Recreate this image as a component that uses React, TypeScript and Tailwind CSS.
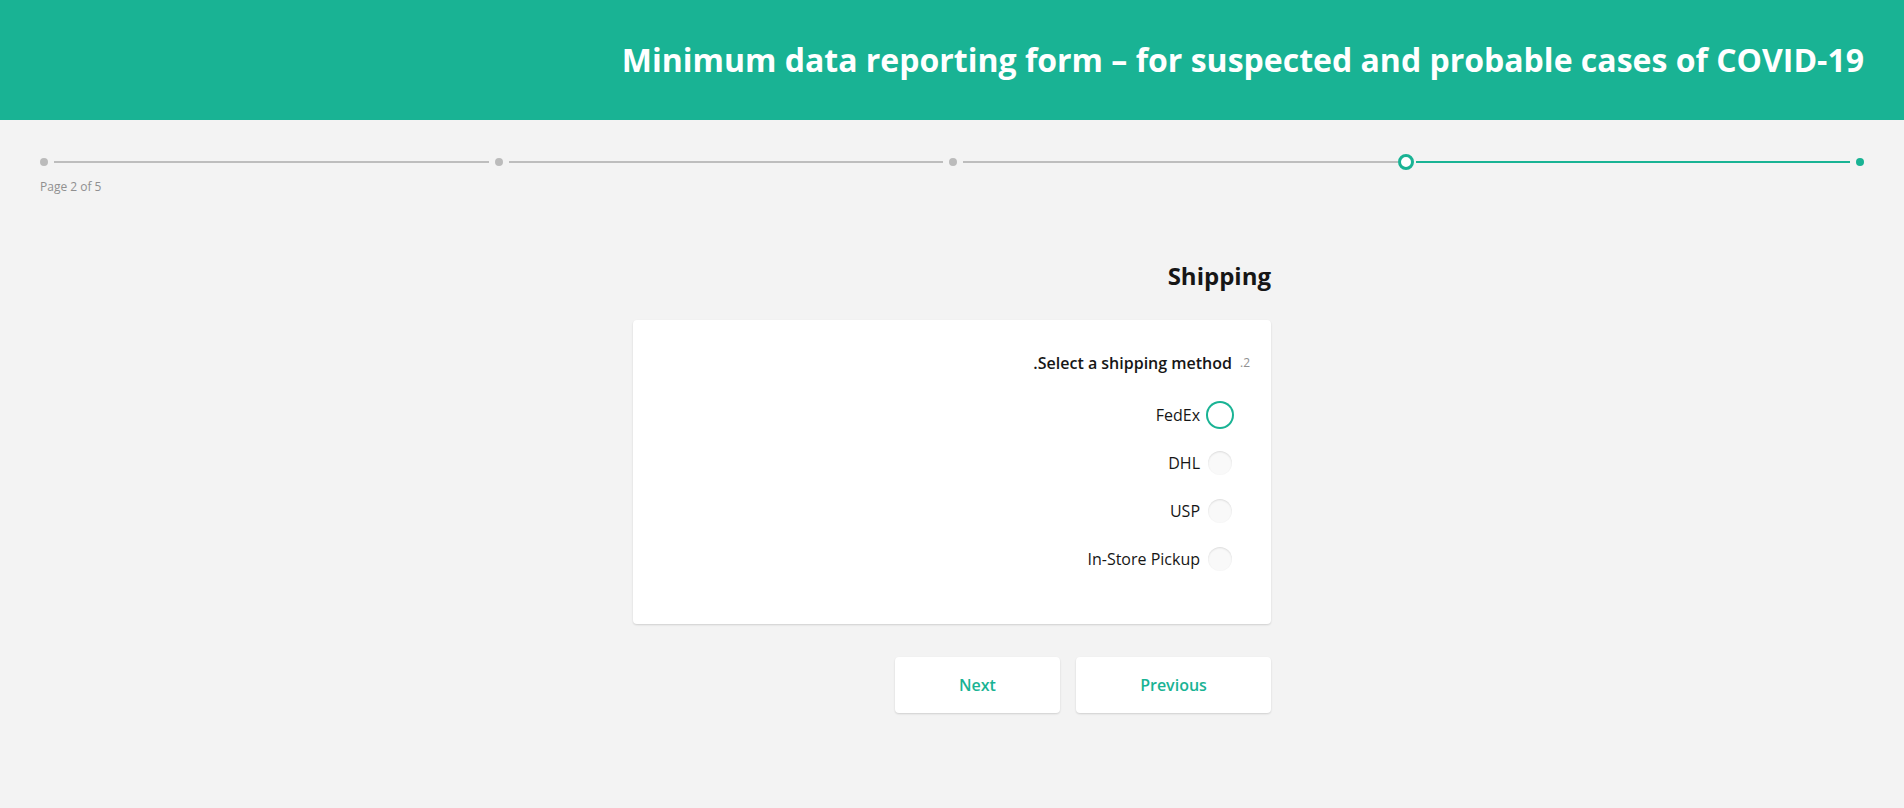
import React from 'react';

const teal = '#19b394';

const options = ['FedEx', 'DHL', 'USP', 'In-Store Pickup'];

const Dot: React.FC<{ active?: boolean; done?: boolean }> = ({ active, done }) => (
  <div className="relative w-[8px] h-[16px] flex items-center justify-center shrink-0">
    {active ? (
      <div className="w-[16px] h-[16px] shrink-0 rounded-full border-[3px] border-[#19b394] bg-white" />
    ) : (
      <div className={`w-[8px] h-[8px] rounded-full ${done ? 'bg-[#19b394]' : 'bg-[#bbbbbb]'}`} />
    )}
  </div>
);

const Line: React.FC<{ done?: boolean; tight?: boolean }> = ({ done, tight }) => (
  <div
    className={`flex-1 h-[2px] ${done ? 'bg-[#19b394]' : 'bg-[#bdbdbd]'} ${
      tight ? 'ml-[6px] mr-[4px]' : 'mx-[6px]'
    }`}
  />
);

export default function App() {
  const [selected] = React.useState<string | null>(null);

  return (
    <div className="min-h-[808px] bg-[#f3f3f3] font-['Open_Sans',sans-serif] text-[#161616]">
      {/* Header */}
      <header className="h-[120px] bg-[#19b394] flex items-center justify-end px-[40px]">
        <h1 className="text-white text-[32px] font-bold leading-[40px]">
          Minimum data reporting form – for suspected and probable cases of COVID-19
        </h1>
      </header>

      {/* Progress */}
      <div className="px-[40px] pt-[34px]">
        <div className="flex items-center h-[16px]">
          <Dot />
          <Line />
          <Dot />
          <Line />
          <Dot />
          <Line tight />
          <Dot active />
          <Line done />
          <Dot done />
        </div>
        <div className="mt-[9px] text-[12px] leading-[16px] text-[#909090]">Page 2 of 5</div>
      </div>

      {/* Page content */}
      <div dir="rtl" className="w-[638px] mx-auto mt-[65px]">
        <h2 className="text-[24px] font-bold leading-[32px] text-[#161616]">Shipping</h2>

        <div className="mt-[28px] bg-white rounded-[4px] shadow-[0_1px_2px_rgba(0,0,0,0.15)] pt-[31px] pb-[51px]">
          <div className="flex items-center gap-[9px] pr-[21px]">
            <span className="w-[9px] text-[12px] leading-[24px] text-[#909090]">2.</span>
            <span className="text-[16px] font-semibold leading-[24px]">Select a shipping method.</span>
          </div>

          <div className="mt-[26px] pr-[37px] flex flex-col gap-[20px]">
            {options.map((o, i) => {
              const focused = i === 0;
              return (
                <label key={o} className="flex items-center gap-[6px] h-[28px] cursor-pointer">
                  <span className="w-[28px] h-[28px] flex items-center justify-center shrink-0">
                    {focused ? (
                      <span className="w-[24px] h-[24px] rounded-full bg-white shadow-[0_0_0_2px_#19b394]" />
                    ) : (
                      <span
                        className={`w-[24px] h-[24px] rounded-full bg-[#f9f9f9] shadow-[inset_0_1px_2px_rgba(0,0,0,0.12)] ${
                          selected === o ? 'border-[7px] border-[#19b394]' : ''
                        }`}
                      />
                    )}
                  </span>
                  <span className="text-[16px] leading-[24px] text-[#161616]">{o}</span>
                </label>
              );
            })}
          </div>
        </div>

        <div className="mt-[33px] flex gap-[16px]">
          <button
            className="w-[195px] h-[56px] bg-white rounded-[4px] shadow-[0_1px_2px_rgba(0,0,0,0.15)] text-[16px] font-semibold"
            style={{ color: teal }}
          >
            Previous
          </button>
          <button
            className="w-[165px] h-[56px] bg-white rounded-[4px] shadow-[0_1px_2px_rgba(0,0,0,0.15)] text-[16px] font-semibold"
            style={{ color: teal }}
          >
            Next
          </button>
        </div>
      </div>
    </div>
  );
}
